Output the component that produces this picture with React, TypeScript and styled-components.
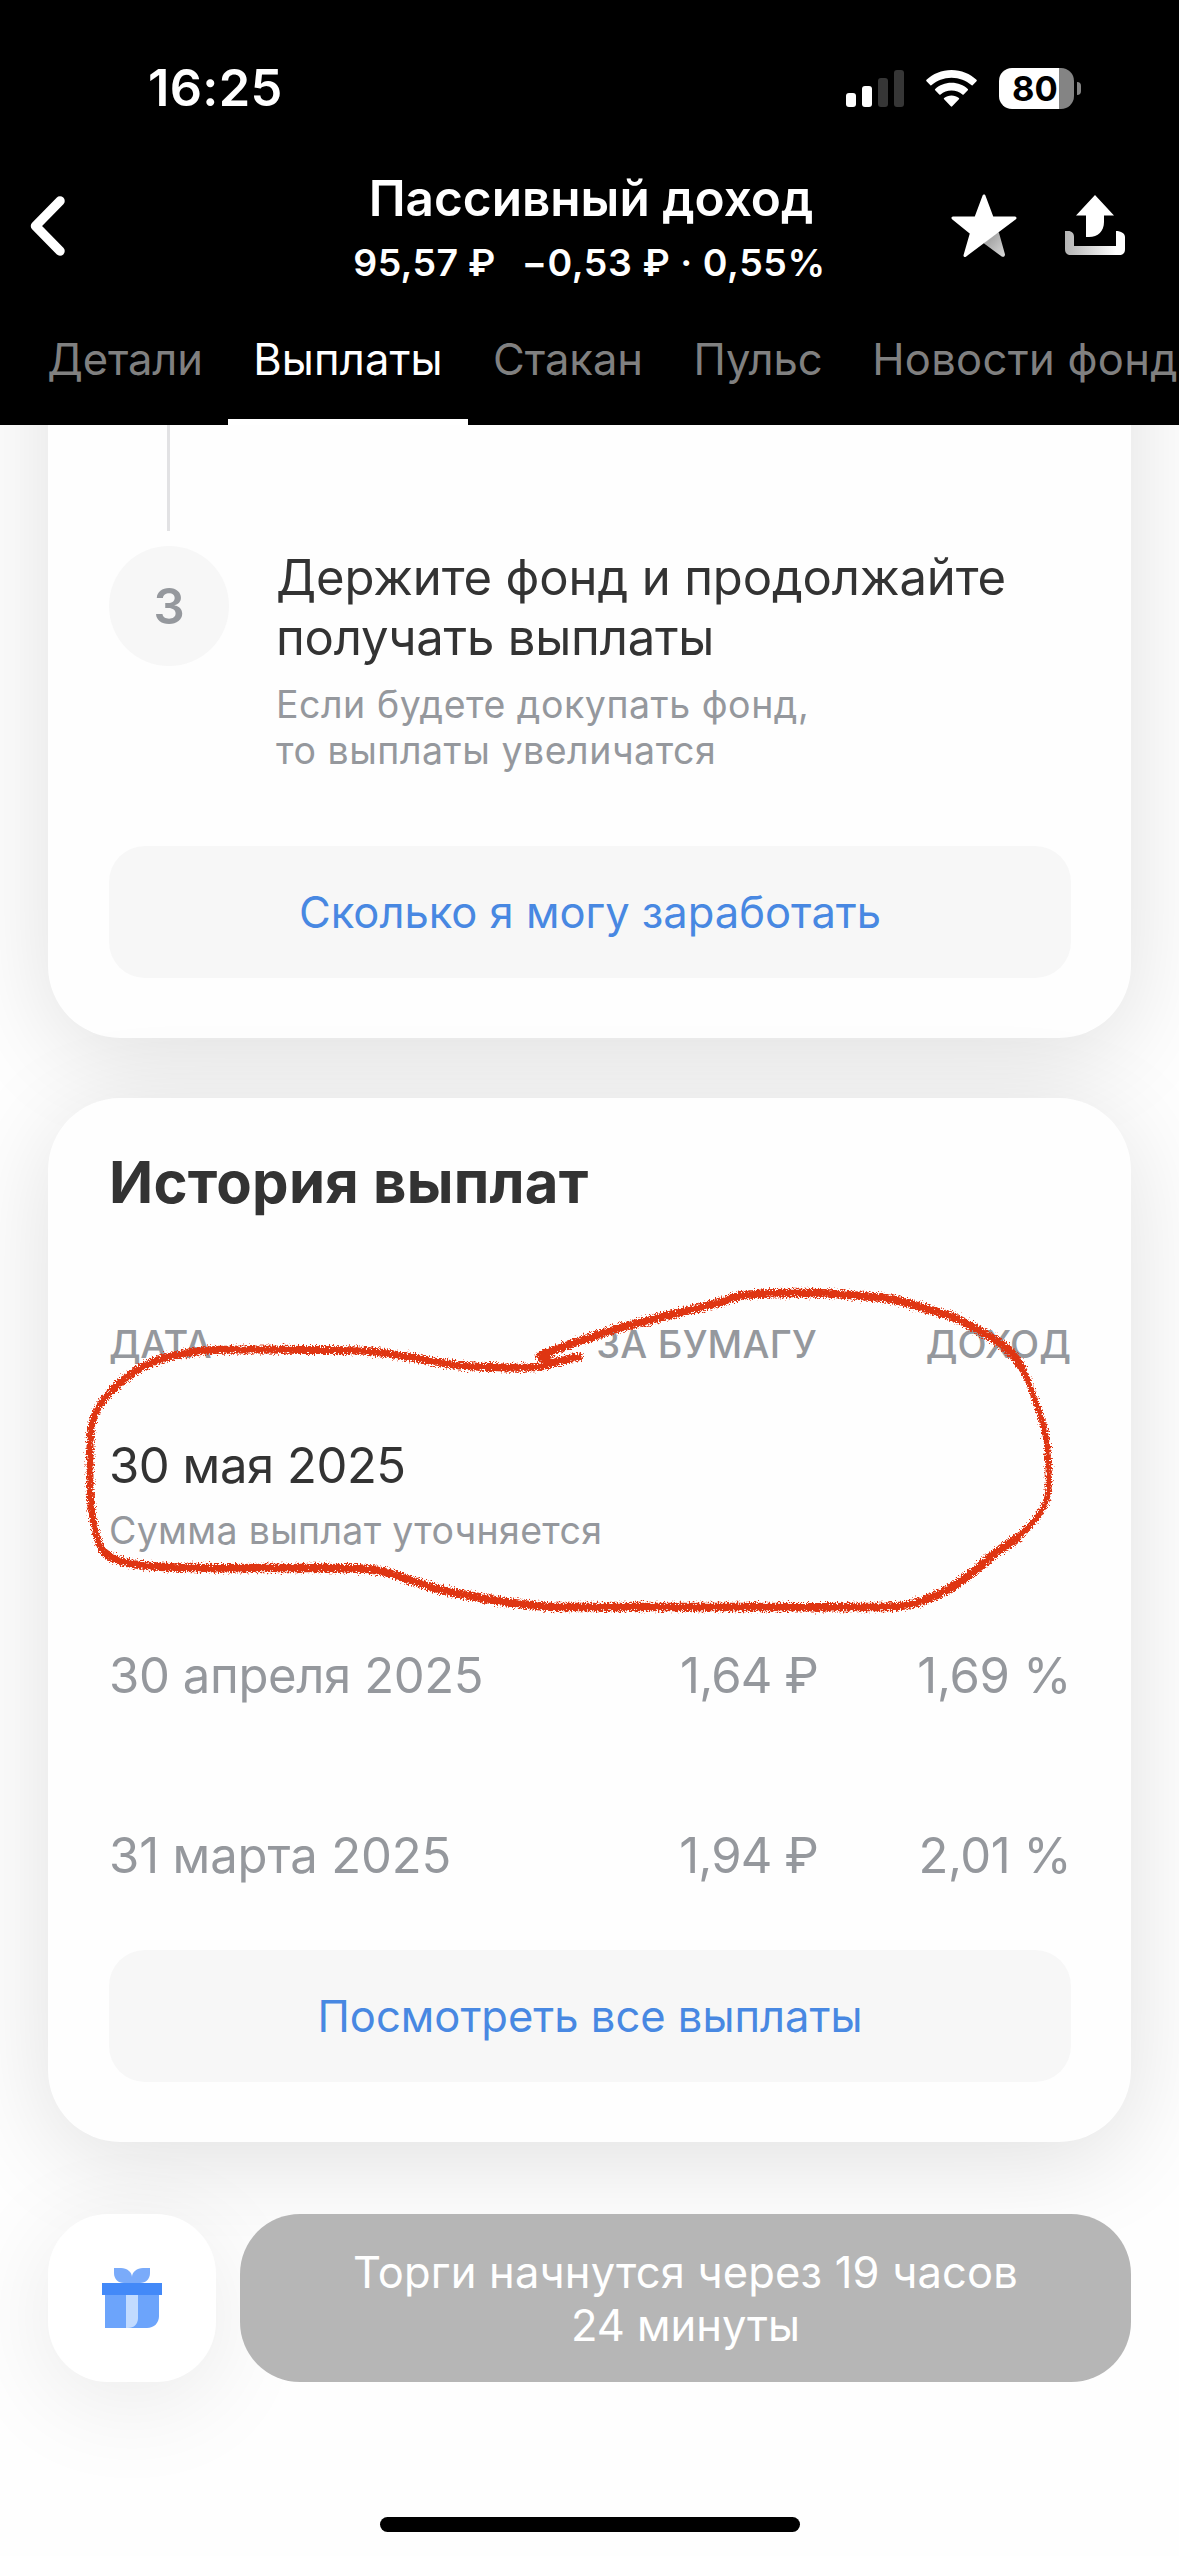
import React from "react";
import styled, { createGlobalStyle } from "styled-components";

const GlobalStyle = createGlobalStyle`
  * { box-sizing: border-box; }
  body { margin: 0; background: #fff; }
`;

const Screen = styled.div`
  width: 1179px;
  height: 2556px;
  overflow: hidden;
  background: #fefefe;
  color: #333;
  font-family: Inter, "Liberation Sans", sans-serif;
  display: flex;
  flex-direction: column;
`;

/* One line-box per text style; tracking is tuned per string */
const Text = styled.div<{ $size: number; $line: number; $weight?: number; $track?: number; $color?: string }>`
  font-size: ${(p) => p.$size}px;
  line-height: ${(p) => p.$line}px;
  font-weight: ${(p) => p.$weight ?? 400};
  letter-spacing: ${(p) => p.$track ?? 0}px;
  color: ${(p) => p.$color ?? "inherit"};
  white-space: nowrap;
`;

const Header = styled.header`
  position: relative;
  z-index: 2;
  flex: none;
  height: 425px;
  background: #000;
  color: #fff;
`;

const StatusBar = styled.div`
  height: 168px;
  padding: 8px 98px 0 148px;
  display: flex;
  align-items: center;
  justify-content: space-between;
`;

const StatusIcons = styled.div`
  display: flex;
  align-items: center;
`;

const Wifi = styled.svg`
  margin: 0 22px;
`;

const Battery = styled.div`
  width: 75px;
  height: 41px;
  border-radius: 13px;
  background: linear-gradient(90deg, #fff 60px, #848484 60px);
  color: #000;
  padding-left: 13px;
`;

const BatteryCap = styled.div`
  width: 4px;
  height: 13px;
  margin-left: 3px;
  border-radius: 0 4px 4px 0;
  background: #848484;
`;

const NavBar = styled.div`
  height: 120px;
  padding: 0 54px 0 30px;
  display: grid;
  grid-template-columns: 1fr 520px 1fr;
`;

const NavSide = styled.div<{ $end?: boolean }>`
  display: flex;
  align-items: center;
  justify-content: ${(p) => (p.$end ? "flex-end" : "flex-start")};
  gap: 48px;
  padding-bottom: 4px;
`;

const TitleBlock = styled.div`
  display: flex;
  flex-direction: column;
  align-items: center;
  gap: 10px;
  padding-left: 24px;
`;

const FundName = styled.div`
  padding-left: 3px;
`;

const Quote = styled.div`
  display: flex;
  gap: 26px;
`;

const Tabs = styled.nav`
  height: 137px;
  padding-left: 24px;
  display: flex;
`;

const Tab = styled.div<{ $active?: boolean; $width: number }>`
  flex: none;
  width: ${(p) => p.$width}px;
  padding-top: 11px;
  display: flex;
  align-items: center;
  justify-content: center;
  color: ${(p) => (p.$active ? "#fff" : "#808080")};
  border-bottom: 6px solid ${(p) => (p.$active ? "#fff" : "transparent")};

  &:first-child {
    padding-right: 2px;
  }
`;

/* The list is scrolled, so its first card continues under the header */
const Main = styled.main`
  flex: none;
  margin-top: -240px;
  padding: 0 48px;
  display: flex;
  flex-direction: column;
  gap: 60px;
`;

const Card = styled.section<{ $height: number; $hidden?: number }>`
  position: relative;
  height: ${(p) => p.$height}px;
  padding: ${(p) => p.$hidden ?? 0}px 60px 60px 61px;
  display: flex;
  flex-direction: column;
  background: #fefefe;
  border-radius: 72px;
  box-shadow: 0 18px 102px rgba(0, 0, 0, 0.12);
`;

const Connector = styled.div`
  width: 3px;
  height: 106px;
  margin: 0 0 15px 58px;
  background: #e2e2e4;
`;

const Step = styled.div`
  display: grid;
  grid-template-columns: 120px 1fr;
  column-gap: 47px;
`;

const StepBadge = styled.div`
  height: 120px;
  border-radius: 50%;
  background: #f7f7f7;
  display: flex;
  align-items: center;
  justify-content: center;
  padding-top: 2px;
`;

const StepBody = styled.div`
  display: flex;
  flex-direction: column;
  gap: 14px;
  padding-top: 2px;
`;

const SoftButton = styled.button`
  width: 100%;
  height: 132px;
  margin-top: auto;
  border: 0;
  padding: 0;
  border-radius: 36px;
  background: #f7f7f7;
  font-family: inherit;
  color: #4888e2;
  display: flex;
  align-items: center;
  justify-content: center;
`;

const HistoryHead = styled.div`
  padding-top: 49px;
  margin-bottom: 104px;
`;

const Row = styled.div<{ $after: number }>`
  display: grid;
  grid-template-columns: 1fr 230px 252px;
  margin-bottom: ${(p) => p.$after}px;
`;

const Cell = styled.div<{ $end?: boolean; $inset?: number }>`
  display: flex;
  flex-direction: column;
  gap: 12px;
  padding-right: ${(p) => p.$inset ?? 0}px;
  align-items: ${(p) => (p.$end ? "flex-end" : "flex-start")};
`;

const Scribble = styled.svg`
  position: absolute;
  left: 22px;
  top: 182px;
  pointer-events: none;
`;

const Footer = styled.footer`
  position: relative;
  flex: none;
  height: 168px;
  margin-top: 72px;
  padding: 0 48px;
  display: flex;
  gap: 24px;
`;

const GiftButton = styled.div`
  width: 168px;
  border-radius: 60px;
  background: #fff;
  box-shadow: 0 18px 102px rgba(0, 0, 0, 0.085);
  display: flex;
  align-items: center;
  justify-content: center;
`;

const TradeButton = styled.div`
  position: relative;
  flex: 1;
  border-radius: 60px;
  background: #b6b6b6;
  color: #fff;
  display: flex;
  flex-direction: column;
  align-items: center;
  padding-top: 32px;
`;

const HomeIndicator = styled.div`
  position: relative;
  flex: none;
  align-self: center;
  width: 420px;
  height: 15px;
  margin-top: 135px;
  border-radius: 8px;
  background: #000;
`;

const GREY = "#95989d";

const SignalIcon = () => (
  <svg width="58" height="37" viewBox="0 0 58 37">
    <rect x="0" y="23" width="10" height="14" rx="3" fill="#fff" />
    <rect x="16" y="16" width="10" height="21" rx="3" fill="#fff" />
    <rect x="32" y="8" width="10" height="29" rx="3" fill="#363636" />
    <rect x="48" y="0" width="10" height="37" rx="3" fill="#363636" />
  </svg>
);

const WifiIcon = () => (
  <Wifi width="51" height="37" viewBox="0 0 51 37" fill="#fff">
    <path d="M25.5 0C35.300 0 44.200 3.800 50.500 9.800Q51.200 10.600 50.500 11.300L46.600 15.200Q46 15.700 45.300 15.100C40.200 10.500 33.200 7.700 25.500 7.700S10.800 10.500 5.700 15.100Q5 15.700 4.400 15.200L.5 11.300Q-.2 10.600 .5 9.800C6.800 3.800 15.700 0 25.500 0Z" />
    <path d="M25.500 12.800C32 12.800 37.500 15.200 41.800 18.900Q42.500 19.600 41.800 20.300L37.700 24.400Q37.100 24.900 36.400 24.400C33.500 21.900 29.700 20.500 25.500 20.500S17.500 21.900 14.600 24.400Q13.900 24.900 13.300 24.400L9.200 20.300Q8.500 19.600 9.200 18.900C13.500 15.200 19 12.800 25.500 12.800Z" />
    <path d="M25.500 25.400C28.300 25.400 30.800 26.300 32.900 27.900Q33.600 28.500 32.900 29.200L26.200 36.300Q25.500 37 24.800 36.300L18.100 29.200Q17.400 28.500 18.100 27.900C20.200 26.300 22.700 25.400 25.500 25.400Z" />
  </Wifi>
);

const BackIcon = () => (
  <svg width="35" height="60" viewBox="0 0 35 60">
    <path d="M30 5L5.500 30L30 55" fill="none" stroke="#fff" strokeWidth="9.500" strokeLinecap="round" strokeLinejoin="round" />
  </svg>
);

const StarIcon = () => (
  <svg width="66" height="64" viewBox="0 0 66 64">
    <defs>
      <linearGradient id="fold" x1="0" y1="0" x2="1" y2="1">
        <stop offset="0.300" stopColor="#a8a8a8" />
        <stop offset="1" stopColor="#d8d8d8" />
      </linearGradient>
    </defs>
    <path d="M34 49L47 39L53 60.500Q53 62.500 51 61.500Z" fill="url(#fold)" stroke="url(#fold)" strokeWidth="2" strokeLinejoin="round" />
    <path d="M33 2L41.200 24H64L14 61.500L20.500 39L2 24H24.800Z" fill="#fff" stroke="#fff" strokeWidth="3" strokeLinejoin="round" />
  </svg>
);

const ShareIcon = () => (
  <svg width="60" height="62" viewBox="0 0 60 62">
    <defs>
      <linearGradient id="tray" x1="0" y1="0" x2="1" y2="0">
        <stop offset="0" stopColor="#b4b4b4" />
        <stop offset="0.150" stopColor="#c0c0c0" />
        <stop offset="0.850" stopColor="#fff" />
      </linearGradient>
    </defs>
    <path d="M30 0L49 20.500H39V27C39 36 33 42 24 42H21V20.500H11Z" fill="#fff" />
    <path d="M0 36H3C7 36 9 38.500 9 42V51H51V36C56 36 60 38.500 60 42V54C60 58 58 60 54 60H6C2 60 0 58 0 54Z" fill="url(#tray)" />
  </svg>
);

const GiftIcon = () => (
  <svg width="60" height="60" viewBox="0 0 60 60">
    <path d="M12 0H19C25 0 30 4 30 9C30 4 35 0 41 0H48V5C48 11 44 15 38 15H22C16 15 12 11 12 5Z" fill="#7aabfa" />
    <path d="M3 27H57V48C57 55 52 60 45 60H3Z" fill="#6ca4fb" />
    <path d="M24 27H36V50C36 56 32 60 26 60H24Z" fill="#c2dbff" />
    <rect y="15" width="60" height="12" fill="#4389f8" />
  </svg>
);

const strokePoints: [number, number][] = [
  [540, 1356], [560, 1348], [586, 1339], [619, 1328], [650, 1320], [678, 1313], [718, 1303], [745, 1295], [805, 1293],
  [836, 1294], [884, 1298], [907, 1303], [955, 1318], [982, 1332], [1006, 1348], [1022, 1368], [1034, 1397],
  [1045, 1432], [1048, 1460], [1048, 1493], [1040, 1513], [1018, 1537], [994, 1554], [978, 1568], [947, 1590],
  [907, 1605], [852, 1607], [718, 1607], [560, 1607], [538, 1606], [499, 1601], [446, 1591], [413, 1581],
  [389, 1573], [367, 1569], [310, 1568], [196, 1568], [149, 1566], [124, 1562], [105, 1553], [97, 1537],
  [91, 1505], [90, 1466], [91, 1430], [97, 1410], [113, 1389], [131, 1374], [153, 1362], [181, 1354],
  [214, 1350], [310, 1350], [367, 1351], [403, 1356], [456, 1365], [488, 1367], [538, 1367], [560, 1361], [578, 1357],
];

/* Catmull-Rom spline through the pen samples, handles scaled to each segment */
const smooth = (pts: [number, number][], from: number, to: number) => {
  const tangent = (i: number) => {
    const a = pts[Math.max(0, i - 1)];
    const b = pts[Math.min(pts.length - 1, i + 1)];
    const len = Math.hypot(b[0] - a[0], b[1] - a[1]) || 1;
    return [(b[0] - a[0]) / len, (b[1] - a[1]) / len];
  };
  let d = `M${pts[from][0]} ${pts[from][1]}`;
  for (let i = from; i < to; i++) {
    const b = pts[i];
    const c = pts[i + 1];
    const h = Math.hypot(c[0] - b[0], c[1] - b[1]) / 3;
    const s = tangent(i);
    const t = tangent(i + 1);
    d += `C${b[0] + s[0] * h} ${b[1] + s[1] * h} ${c[0] - t[0] * h} ${c[1] - t[1] * h} ${c[0]} ${c[1]}`;
  }
  return d;
};

const CrayonLoop = () => (
  <Scribble width="1010" height="350" viewBox="70 1280 1010 350" fill="none" stroke="#df3512" strokeLinecap="round" strokeLinejoin="round">
    <defs>
      <filter id="crayon" filterUnits="userSpaceOnUse" x="70" y="1280" width="1010" height="350" colorInterpolationFilters="sRGB">
        <feTurbulence type="fractalNoise" baseFrequency="0.650" numOctaves="2" seed="4" />
        <feDisplacementMap in="SourceGraphic" scale="9" xChannelSelector="R" yChannelSelector="G" />
      </filter>
    </defs>
    <g filter="url(#crayon)">
      <path d={smooth(strokePoints, 0, 15)} strokeWidth="8.500" />
      <path d={smooth(strokePoints, 15, 21)} strokeWidth="6" />
      <path d={smooth(strokePoints, 21, 39)} strokeWidth="8.500" />
      <path d={smooth(strokePoints, 39, 45)} strokeWidth="7" />
      <path d={smooth(strokePoints, 45, strokePoints.length - 1)} strokeWidth="8" />
      <path d="M542 1357L550 1362" strokeWidth="9" />
    </g>
  </Scribble>
);

const tabs = [
  { label: "Детали", width: 204, track: -0.15 },
  { label: "Выплаты", width: 240, track: 0.15, active: true },
  { label: "Стакан", width: 200, track: 0 },
  { label: "Пульс", width: 180, track: 0 },
  { label: "Новости фонд", width: 354, track: 0.3 },
];

const payouts = [
  { date: "30 апреля 2025", dateTrack: -0.38, amount: "1,64 ₽", yield: "1,69 %", yieldTrack: -0.3, after: 120 },
  { date: "31 марта 2025", dateTrack: -0.12, amount: "1,94 ₽", yield: "2,01 %", yieldTrack: -0.5, after: 0 },
];

export default function App() {
  return (
    <Screen>
      <GlobalStyle />
      <Header>
        <StatusBar>
          <Text $size={50.5} $line={60} $weight={600} $track={0.3}>16:25</Text>
          <StatusIcons>
            <SignalIcon />
            <WifiIcon />
            <Battery>
              <Text $size={34.5} $line={41} $weight={700}>80</Text>
            </Battery>
            <BatteryCap />
          </StatusIcons>
        </StatusBar>
        <NavBar>
          <NavSide>
            <BackIcon />
          </NavSide>
          <TitleBlock>
            <FundName>
              <Text $size={49.5} $line={60} $weight={600}>Пассивный доход</Text>
            </FundName>
            <Quote>
              <Text $size={37.5} $line={50} $weight={600} $track={0.3}>95,57 ₽</Text>
              <Text $size={37.5} $line={50} $weight={600} $track={0.55}>−0,53 ₽ · 0,55%</Text>
            </Quote>
          </TitleBlock>
          <NavSide $end>
            <StarIcon />
            <ShareIcon />
          </NavSide>
        </NavBar>
        <Tabs>
          {tabs.map((t) => (
            <Tab key={t.label} $active={t.active} $width={t.width}>
              <Text $size={43.5} $line={54} $track={t.track}>{t.label}</Text>
            </Tab>
          ))}
        </Tabs>
      </Header>

      <Main>
        <Card $height={853} $hidden={240}>
          <Connector />
          <Step>
            <StepBadge>
              <Text $size={49} $line={60} $weight={600} $color={GREY}>3</Text>
            </StepBadge>
            <StepBody>
              <div>
                <Text $size={49} $line={60} $track={-0.13}>Держите фонд и продолжайте</Text>
                <Text $size={49} $line={60} $track={-0.2}>получать выплаты</Text>
              </div>
              <div>
                <Text $size={37.5} $line={46} $track={0.53} $color={GREY}>Если будете докупать фонд,</Text>
                <Text $size={37.5} $line={46} $track={0.53} $color={GREY}>то выплаты увеличатся</Text>
              </div>
            </StepBody>
          </Step>
          <SoftButton>
            <Text $size={43.5} $line={54}>Сколько я могу заработать</Text>
          </SoftButton>
        </Card>

        <Card $height={1044}>
          <HistoryHead>
            <Text $size={58} $line={70} $weight={700} $track={0.25}>История выплат</Text>
          </HistoryHead>
          <Row $after={69}>
            <Text $size={38} $line={46} $weight={500} $track={-0.4} $color={GREY}>ДАТА</Text>
            <Cell $end $inset={2}><Text $size={38} $line={46} $weight={500} $track={0.25} $color={GREY}>ЗА БУМАГУ</Text></Cell>
            <Cell $end><Text $size={38} $line={46} $weight={500} $color={GREY}>ДОХОД</Text></Cell>
          </Row>
          <Row $after={92}>
            <Cell>
              <Text $size={49} $line={60} $track={-0.45}>30 мая 2025</Text>
              <Text $size={37.5} $line={46} $track={0.31} $color={GREY}>Сумма выплат уточняется</Text>
            </Cell>
          </Row>
          {payouts.map((p) => (
            <Row key={p.date} $after={p.after}>
              <Text $size={49} $line={60} $track={p.dateTrack} $color={GREY}>{p.date}</Text>
              <Cell $end $inset={1}><Text $size={49} $line={60} $track={-0.85} $color={GREY}>{p.amount}</Text></Cell>
              <Cell $end $inset={-1}><Text $size={49} $line={60} $track={p.yieldTrack} $color={GREY}>{p.yield}</Text></Cell>
            </Row>
          ))}
          <SoftButton>
            <Text $size={43.5} $line={54}>Посмотреть все выплаты</Text>
          </SoftButton>
          <CrayonLoop />
        </Card>
      </Main>

      <Footer>
        <GiftButton>
          <GiftIcon />
        </GiftButton>
        <TradeButton>
          <Text $size={43.5} $line={53} $track={0.18}>Торги начнутся через 19 часов</Text>
          <Text $size={43.5} $line={53}>24 минуты</Text>
        </TradeButton>
      </Footer>
      <HomeIndicator />
    </Screen>
  );
}
